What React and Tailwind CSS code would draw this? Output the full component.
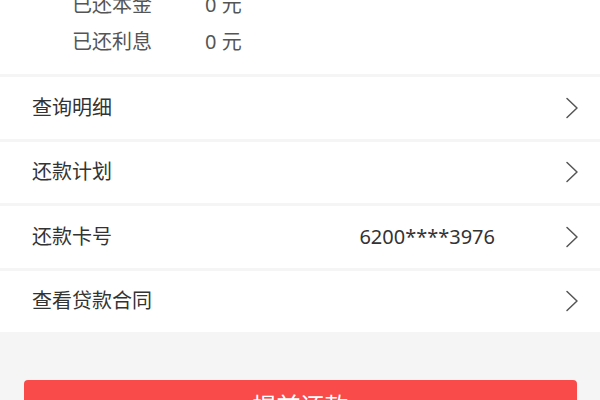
const font = { fontFamily: '"Noto Sans", "Noto Sans CJK SC", sans-serif' }

function Chevron() {
  return (
    <svg width="14" height="22" viewBox="0 0 14 22" fill="none" className="shrink-0">
      <path d="M2 1.5 L12 11 L2 20.5" stroke="#555" strokeWidth="1.5" strokeLinecap="round" strokeLinejoin="round" />
    </svg>
  )
}

const summary = [
  { label: '已还本金', value: '0 元' },
  { label: '已还利息', value: '0 元' },
]

const rows = [
  { label: '查询明细' },
  { label: '还款计划' },
  { label: '还款卡号', value: '6200****3976' },
  { label: '查看贷款合同' },
]

export default function App() {
  return (
    <div className="w-[600px] h-[400px] overflow-hidden bg-[#f5f5f5]" style={font}>
      <div className="bg-white -mt-[14px] pb-[14px]">
        {summary.map((s) => (
          <div key={s.label} className="h-[37px] flex items-center pl-[72px] text-[20px] text-[#555]">
            <span className="w-[133px]">{s.label}</span>
            <span>{s.value}</span>
          </div>
        ))}
      </div>
      {rows.map((r) => (
        <div key={r.label} className="mt-[3px] h-[61.5px] bg-white flex items-center pl-[32px] pr-[21px] text-[20px] text-[#333]">
          <span className="flex-1">{r.label}</span>
          {r.value && <span className="mr-[70px] text-[20px]">{r.value}</span>}
          <Chevron />
        </div>
      ))}
      <div className="pt-[48px] pl-[24px] pr-[23px]">
        <button className="w-full h-[52px] rounded-[4px] bg-[#fa4b4b] text-white text-[24px] flex items-center justify-center">
          提前还款
        </button>
      </div>
    </div>
  )
}
